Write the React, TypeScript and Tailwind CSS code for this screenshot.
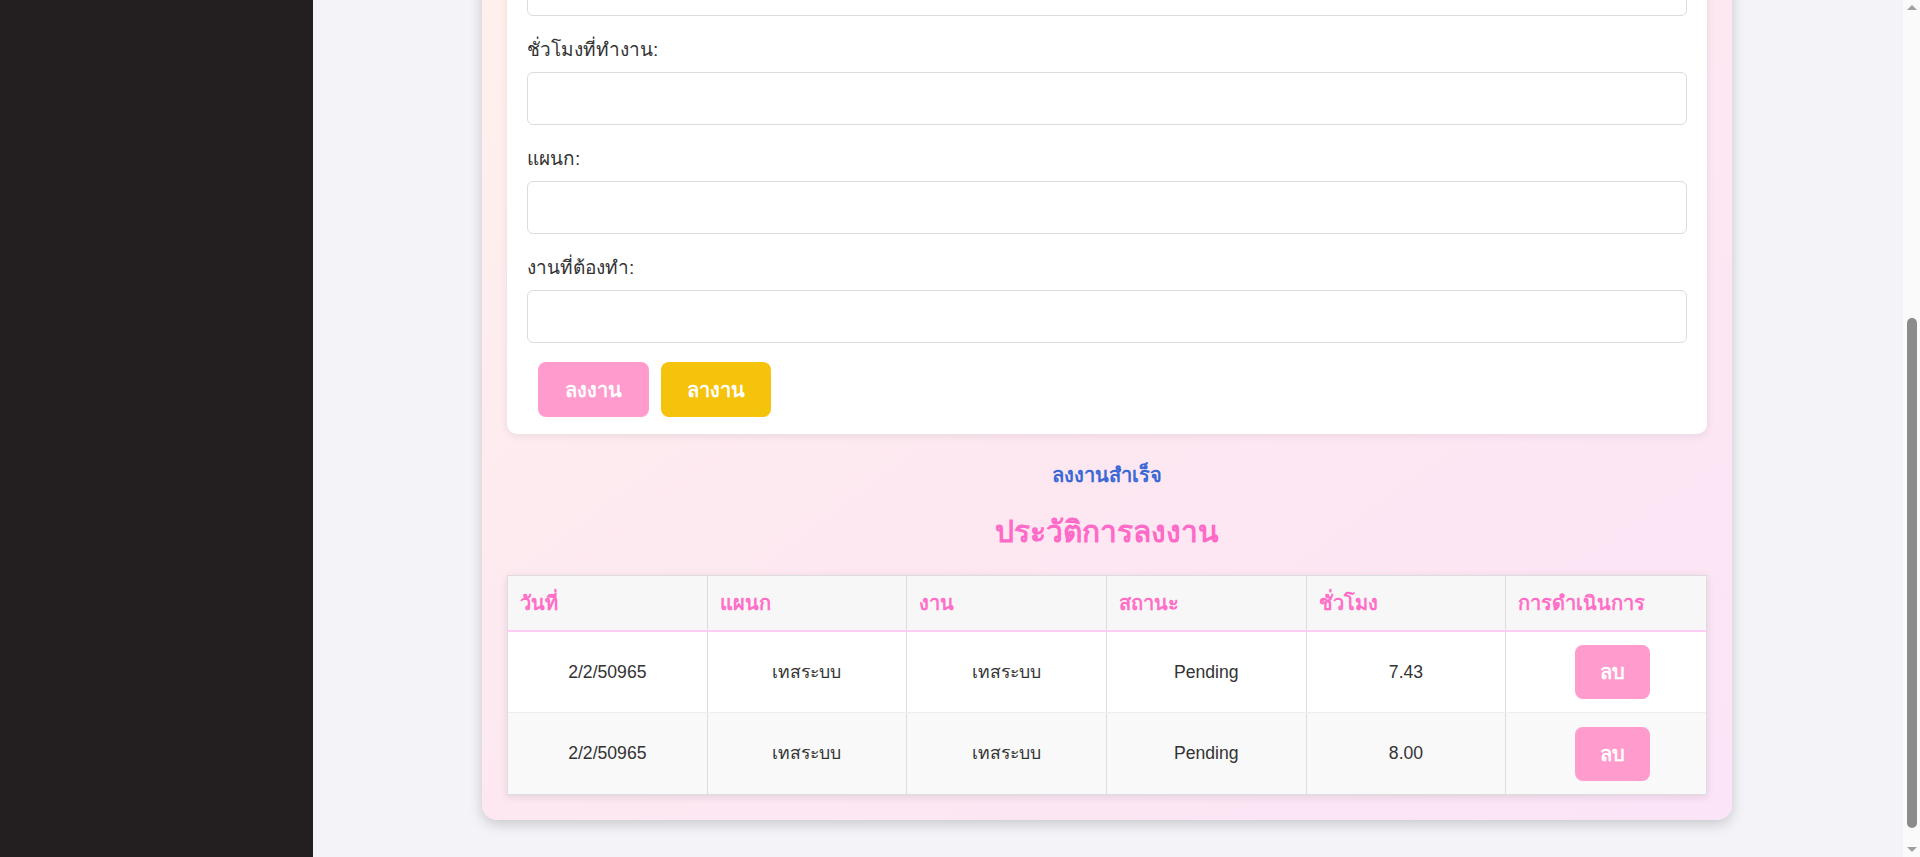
import React from "react";

const fields = ["", "ชั่วโมงที่ทำงาน:", "แผนก:", "งานที่ต้องทำ:"];
const headers = ["วันที่", "แผนก", "งาน", "สถานะ", "ชั่วโมง", "การดำเนินการ"];
const rows = [
  { date: "2/2/50965", dept: "เทสระบบ", task: "เทสระบบ", status: "Pending", hours: "7.43" },
  { date: "2/2/50965", dept: "เทสระบบ", task: "เทสระบบ", status: "Pending", hours: "8.00" },
];

export default function App() {
  return (
    <div className="flex h-[857px] w-[1920px] overflow-hidden bg-[#f3f3f8] font-['Liberation_Sans','Noto_Sans',sans-serif] text-[#333]">
      <aside className="w-[313px] shrink-0 bg-[#231f20]" />
      <main className="flex flex-1 justify-center pr-[2px]">
        <div className="mt-[-82px] self-start w-[1250px] rounded-[15px] bg-gradient-to-br from-[#fff1ec] via-[#fde8f1] to-[#fbe4f7] p-[25px] shadow-[0_4px_14px_rgba(0,0,0,0.18)]">
          <div className="rounded-[10px] bg-white px-5 pt-5 pb-[17px] shadow-[0_2px_8px_rgba(0,0,0,0.08)]">
            <div className="flex flex-col gap-[22px]">
              {fields.map((f, i) => (
                <div key={i} className="flex flex-col">
                  {f && <label className="mb-[10px] block h-6 text-[19px] leading-6 text-[#333]">{f}</label>}
                  <input className="h-[53px] w-full rounded-md border border-[#dcdcdc] bg-white px-3 outline-none" />
                </div>
              ))}
            </div>
            <div className="mt-[19px] flex gap-3 pl-[11px]">
              <button className="h-[55px] rounded-lg bg-[#ff9bcd] px-[27px] text-[20px] font-bold text-white">ลงงาน</button>
              <button className="h-[55px] rounded-lg bg-[#f5c20c] px-[26px] text-[20px] font-bold text-white">ลางาน</button>
            </div>
          </div>

          <p className="mt-[29px] text-center text-[20px] font-bold leading-6 text-[#3a68d6]">ลงงานสำเร็จ</p>
          <h2 className="mt-[27px] text-center text-[30px] font-bold leading-9 text-[#ff69c8]">ประวัติการลงงาน</h2>

          <div className="mt-[25px] border border-[#dddddd] bg-white shadow-[0_2px_8px_rgba(0,0,0,0.1)]">
            <div className="grid h-[56px] grid-cols-6 border-b-2 border-[#ffccf5] bg-[#f7f7f7]">
              {headers.map((h, i) => (
                <div key={h} className={`flex items-center px-3 text-[20px] font-bold text-[#ff6ec7] ${i < 5 ? "border-r border-[#dddddd]" : ""}`}>
                  {h}
                </div>
              ))}
            </div>
            {rows.map((r, ri) => (
              <div key={ri} className={`grid h-[81px] grid-cols-6 ${ri === 0 ? "border-b border-[#eeeeee] bg-white" : "bg-[#f9f9f9]"}`}>
                {[r.date, r.dept, r.task, r.status, r.hours].map((c, i) => (
                  <div key={i} className="flex items-center justify-center border-r border-[#dddddd] text-[17.6px]">
                    {c}
                  </div>
                ))}
                <div className="flex items-center justify-center">
                  <button className="ml-3 h-[54px] rounded-lg bg-[#ff9bcd] px-[25px] text-[20px] font-bold text-white">ลบ</button>
                </div>
              </div>
            ))}
          </div>
        </div>
      </main>
      <div className="relative flex w-[17px] shrink-0 flex-col items-center bg-[#fafafa]">
        <div className="mt-[5px] h-0 w-0 border-x-[5px] border-b-[5px] border-x-transparent border-b-[#a0a0a0]" />
        <div className="mt-[308px] h-[510px] w-[10px] rounded-full bg-[#8b8b8b]" />
        <div className="mt-auto mb-[5px] h-0 w-0 border-x-[5px] border-t-[5px] border-x-transparent border-t-[#a0a0a0]" />
      </div>
    </div>
  );
}
